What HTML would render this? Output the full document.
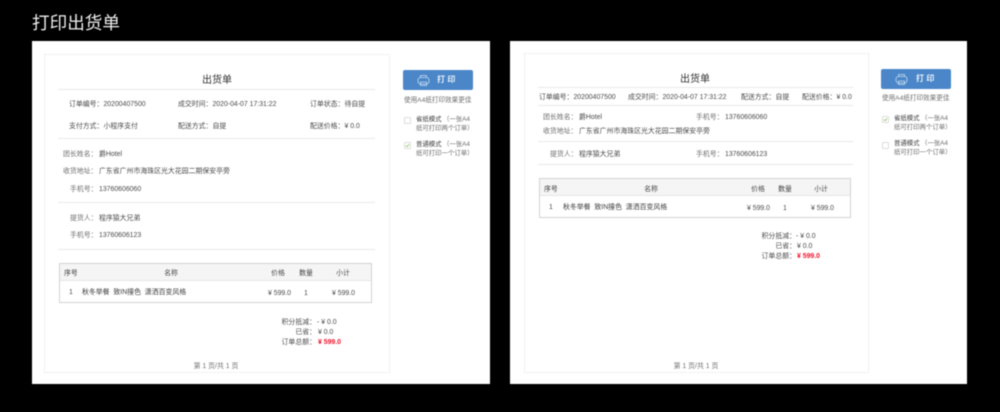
<!DOCTYPE html>
<html lang="zh"><head><meta charset="utf-8"><title>打印出货单</title>
<style>
html,body{margin:0;padding:0;background:#000;width:1000px;height:412px;overflow:hidden}
body{position:relative;font-family:"Liberation Sans","Noto Sans CJK SC",sans-serif}
#w{position:absolute;left:0;top:0;width:1000px;height:412px;filter:blur(.4px)}
#w div,#w span,#w svg{position:absolute}
span{font-size:6.9px;line-height:10px;white-space:pre;color:#4a4a4a;margin-top:2px}
.h{font-size:17.6px;line-height:24px;color:#eee;left:32px;top:9px}
.p{background:#fff;top:41px;height:343px}
.d{border:1px dotted #e4e4e4;box-sizing:border-box}
.l{height:1px;background:#e9e9e9}
span.t{font-size:10px;line-height:14px;color:#333}
.c{transform:translateX(-50%)}
.r{transform:translateX(-100%)}
.b{background:#4a86c8;border-radius:2px;width:70px;height:20px}
span.bt{color:#e8f0f9;font-size:8px;font-weight:bold;letter-spacing:2.4px}
.g{color:#6e6e6e}
.k{color:#3c3c3c}
span.s{font-size:6.4px}
span.u{font-size:6.6px}
.x{width:5px;height:5px;border:1px solid #ddd;box-sizing:content-box;background:#fff;border-radius:1px}
.tb{border:1px solid #d2d2d2;box-sizing:border-box;background:#fff}
.th{background:#f5f5f5;border-bottom:1px solid #e6e6e6;box-sizing:border-box}
span.red{color:#f0142d;font-weight:bold}
</style></head><body><div id="w">
<span class="h">打印出货单</span>

<!-- panel 1 -->
<div class="p" style="left:32px;width:458px"></div>
<div class="d" style="left:44px;top:54px;width:346px;height:319px"></div>
<span class="t c" style="left:217px;top:72px">出货单</span>
<div class="l" style="left:58px;top:89px;width:317px"></div>
<span style="left:69px;top:98px">订单编号：20200407500</span>
<span style="left:178px;top:98px">成交时间：2020-04-07 17:31:22</span>
<span style="left:310px;top:98px">订单状态：待自提</span>
<span style="left:69px;top:120px">支付方式：小程序支付</span>
<span style="left:178px;top:120px">配送方式：自提</span>
<span style="left:310px;top:120px">配送价格：¥ 0.0</span>
<div class="l" style="left:58px;top:138px;width:317px"></div>
<span class="g" style="left:63px;top:148px">团长姓名：</span><span style="left:99px;top:148px">爵Hotel</span>
<span class="g" style="left:63px;top:165px">收货地址：</span><span style="left:99px;top:165px">广东省广州市海珠区光大花园二期保安亭旁</span>
<span class="g" style="left:70px;top:183px">手机号：</span><span style="left:99px;top:183px">13760606060</span>
<div class="l" style="left:58px;top:202px;width:317px"></div>
<span class="g" style="left:70px;top:212px">提货人：</span><span style="left:99px;top:212px">程序猿大兄弟</span>
<span class="g" style="left:70px;top:229px">手机号：</span><span style="left:99px;top:229px">13760606123</span>
<div class="l" style="left:58px;top:249px;width:317px"></div>
<div class="tb" style="left:59px;top:263px;width:313px;height:40px"></div>
<div class="th" style="left:60px;top:264px;width:311px;height:17px"></div>
<span class="k" style="left:64px;top:267px">序号</span>
<span class="c" style="left:171px;top:267px">名称</span>
<span class="c" style="left:278px;top:267px">价格</span>
<span class="c k" style="left:306px;top:267px">数量</span>
<span class="c" style="left:343px;top:267px">小计</span>
<span style="left:69px;top:286px">1</span>
<span class="k" style="left:82px;top:286px">秋冬举餐  致IN撞色  潇洒百变风格</span>
<span style="left:268px;top:287px">¥ 599.0</span>
<span style="left:304px;top:287px">1</span>
<span style="left:332px;top:287px">¥ 599.0</span>
<span class="r" style="left:316px;top:316px">积分抵减：</span><span style="left:317px;top:316px">- ¥ 0.0</span>
<span class="r" style="left:316px;top:326px">已省：</span><span style="left:318px;top:326px">¥ 0.0</span>
<span class="r" style="left:316px;top:336px">订单总额：</span><span class="red" style="left:318px;top:336px">¥ 599.0</span>
<span class="c g" style="left:216px;top:360px">第 1 页/共 1 页</span>
<div class="b" style="left:403px;top:70px"></div>
<svg style="left:417px;top:74px" width="13" height="13" viewBox="0 0 13 13" fill="none" stroke="#c6dcf1" stroke-width=".8"><rect x="1" y="3.5" width="11" height="6.5" rx="2.5"/><path d="M3.5 3.5V1.5h6V3.5M3.5 8v3.5h6V8h-6z"/></svg>
<span class="bt" style="left:437px;top:73px">打印</span>
<span class="g u" style="left:404px;top:94px">使用A4纸打印效果更佳</span>
<div class="x" style="left:404px;top:117px"></div>
<span class="k s" style="left:416px;top:113px">省纸模式</span><span class="g s" style="left:443px;top:113px">（一张A4</span>
<span class="g s" style="left:416px;top:122px">纸可打印两个订单）</span>
<div class="x" style="left:404px;top:142px"></div>
<svg style="left:405px;top:143px" width="5" height="5" viewBox="0 0 6 6" fill="none" stroke="#8cc45c" stroke-width="1"><path d="M1 3l1.5 1.5L5 1.5"/></svg>
<span class="k s" style="left:416px;top:138px">普通模式</span><span class="g s" style="left:443px;top:138px">（一张A4</span>
<span class="g s" style="left:416px;top:147px">纸可打印一个订单）</span>

<!-- panel 2 -->
<div class="p" style="left:510px;width:457px"></div>
<div class="d" style="left:524px;top:53px;width:345px;height:320px"></div>
<span class="t c" style="left:695px;top:71px">出货单</span>
<div class="l" style="left:538px;top:87px;width:315px"></div>
<span style="left:539px;top:91px">订单编号：20200407500</span>
<span style="left:628px;top:91px">成交时间：2020-04-07 17:31:22</span>
<span style="left:741px;top:91px">配送方式：自提</span>
<span style="left:802px;top:91px">配送价格：¥ 0.0</span>
<div class="l" style="left:538px;top:105px;width:315px"></div>
<span class="g" style="left:543px;top:111px">团长姓名：</span><span style="left:579px;top:111px">爵Hotel</span>
<span class="g" style="left:696px;top:111px">手机号：</span><span style="left:725px;top:111px">13760606060</span>
<span class="g" style="left:543px;top:125px">收货地址：</span><span style="left:579px;top:125px">广东省广州市海珠区光大花园二期保安亭旁</span>
<div class="l" style="left:538px;top:141px;width:315px"></div>
<span class="g" style="left:550px;top:148px">提货人：</span><span style="left:579px;top:148px">程序猿大兄弟</span>
<span class="g" style="left:696px;top:148px">手机号：</span><span style="left:725px;top:148px">13760606123</span>
<div class="l" style="left:538px;top:164px;width:315px"></div>
<div class="tb" style="left:539px;top:178px;width:312px;height:40px"></div>
<div class="th" style="left:540px;top:179px;width:310px;height:17px"></div>
<span class="k" style="left:544px;top:183px">序号</span>
<span class="c" style="left:651px;top:183px">名称</span>
<span class="c" style="left:758px;top:183px">价格</span>
<span class="c k" style="left:785px;top:183px">数量</span>
<span class="c" style="left:821px;top:183px">小计</span>
<span style="left:549px;top:201px">1</span>
<span class="k" style="left:563px;top:201px">秋冬举餐  致IN撞色  潇洒百变风格</span>
<span style="left:747px;top:202px">¥ 599.0</span>
<span style="left:783px;top:202px">1</span>
<span style="left:811px;top:202px">¥ 599.0</span>
<span class="r" style="left:796px;top:230px">积分抵减：</span><span style="left:796px;top:230px">- ¥ 0.0</span>
<span class="r" style="left:796px;top:240px">已省：</span><span style="left:797px;top:240px">¥ 0.0</span>
<span class="r" style="left:796px;top:250px">订单总额：</span><span class="red" style="left:797px;top:250px">¥ 599.0</span>
<span class="c g" style="left:696px;top:360px">第 1 页/共 1 页</span>
<div class="b" style="left:881px;top:69px"></div>
<svg style="left:895px;top:73px" width="13" height="13" viewBox="0 0 13 13" fill="none" stroke="#c6dcf1" stroke-width=".8"><rect x="1" y="3.5" width="11" height="6.5" rx="2.5"/><path d="M3.5 3.5V1.5h6V3.5M3.5 8v3.5h6V8h-6z"/></svg>
<span class="bt" style="left:916px;top:72px">打印</span>
<span class="g u" style="left:882px;top:92px">使用A4纸打印效果更佳</span>
<div class="x" style="left:882px;top:116px"></div>
<svg style="left:883px;top:117px" width="5" height="5" viewBox="0 0 6 6" fill="none" stroke="#8cc45c" stroke-width="1"><path d="M1 3l1.5 1.5L5 1.5"/></svg>
<span class="k s" style="left:894px;top:112px">省纸模式</span><span class="g s" style="left:921px;top:112px">（一张A4</span>
<span class="g s" style="left:894px;top:121px">纸可打印两个订单）</span>
<div class="x" style="left:882px;top:142px"></div>
<span class="k s" style="left:894px;top:137px">普通模式</span><span class="g s" style="left:921px;top:137px">（一张A4</span>
<span class="g s" style="left:894px;top:146px">纸可打印一个订单）</span>
</div></body></html>
